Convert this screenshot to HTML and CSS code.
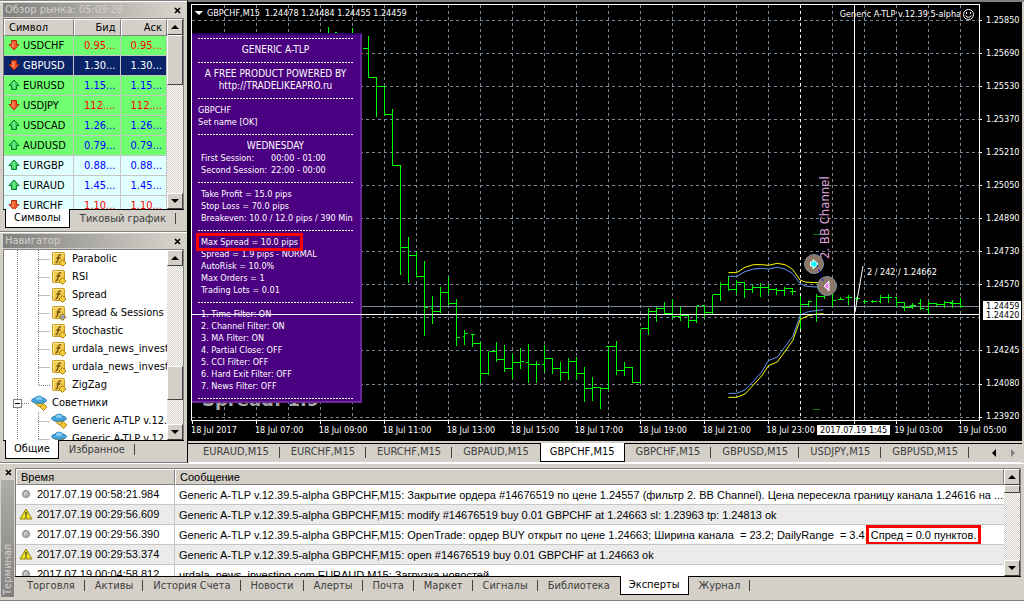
FILE: index.html
```html
<!DOCTYPE html>
<html lang="ru">

<head>
    <meta charset="UTF-8">
    <meta name="viewport" content="width=device-width, initial-scale=1.0">
    <title>GBPCHF,M15</title>
    <link rel="stylesheet" href="styles.css">
</head>

<body>
    <svg class="defs" aria-hidden="true">
        <symbol id="up" viewBox="0 0 12 12">
            <path d="M6 1L11 6.500H8.500V10.500H3.500V6.500H1Z" fill="#3fd860" stroke="#087c28" />
            <path d="M6 3V9" stroke="#a8f8b0" />
        </symbol>
        <symbol id="down" viewBox="0 0 12 12">
            <path d="M6 11L11 5.500H8.500V1.500H3.500V5.500H1Z" fill="#f45a28" stroke="#b02c10" />
            <path d="M5 3V8" stroke="#ffb48c" />
        </symbol>
        <symbol id="func" viewBox="0 0 16 16">
            <rect x="1.500" y="1.500" width="12" height="12" rx="1" fill="#f2c94a" stroke="#c79a20" />
            <path d="M2.500 12V2.500H12" fill="none" stroke="#ffe793" />
            <path d="M10 4Q8 3 7.500 6L6.500 10Q6 12 4.500 11.500M5.500 7H9.500" fill="none" stroke="#6b5210" stroke-width="1.300" />
            <path d="M11.500 8.500L15 12L11.500 15.500L8 12Z" fill="currentColor" stroke="#a37d10" />
        </symbol>
        <symbol id="expert" viewBox="0 0 16 16">
            <path d="M7 6L13 9L12 13L7 11L4 8Z" fill="#f0c83c" stroke="#b28a18" />
            <ellipse cx="8" cy="5.500" rx="7.500" ry="2.800" fill="#4aa8e0" stroke="#2678b0" />
            <path d="M4 5Q4 1 8 1T12 5Q8 7 4 5Z" fill="#7cccf4" stroke="#3c94cc" />
            <path d="M12.500 8.500L16 12L12.500 15.500L9 12Z" fill="#f4cc3c" stroke="#b08818" />
        </symbol>
        <symbol id="warn" viewBox="0 0 14 12">
            <path d="M7 1L13 11H1Z" fill="#eee022" stroke="#8c8010" stroke-linejoin="round" />
            <path d="M7 4V7.500M7 8.500V10" stroke="#333" stroke-width="1.300" />
        </symbol>
        <symbol id="info" viewBox="0 0 14 12">
            <circle cx="7" cy="6" r="3.500" fill="#b4b4b4" stroke="#848484" />
            <path d="M5 7L8 4" stroke="#e8e8e8" />
        </symbol>
        <symbol id="arrow-up" viewBox="0 0 8 4"><path d="M4 0L8 4H0Z" /></symbol>
        <symbol id="arrow-down" viewBox="0 0 8 4"><path d="M0 0H8L4 4Z" /></symbol>
        <symbol id="close" viewBox="0 0 7 7"><path d="M1 1L6 6M6 1L1 6" stroke="#000" stroke-width="1.600" /></symbol>
        <symbol id="guide" viewBox="0 0 46 18">
            <path d="M13.500 0V18M34.500 0V18M34.500 9.500H46" stroke="#808080" stroke-dasharray="1 1" />
        </symbol>
        <symbol id="guide-last" viewBox="0 0 46 18">
            <path d="M13.500 0V18M34.500 0V9.500H46" fill="none" stroke="#808080" stroke-dasharray="1 1" />
        </symbol>
        <symbol id="guide-root" viewBox="0 0 26 18">
            <path d="M13.500 0V18M18 9.500H25" stroke="#808080" stroke-dasharray="1 1" />
            <rect x="9.500" y="5.500" width="8" height="8" fill="#fff" stroke="#808080" />
            <path d="M11 9.500H16" stroke="#000" />
        </symbol>
    </svg>

    <div class="app">
        <aside class="sidebar">
            <section class="panel market">
                <header class="caption"><span>Обзор рынка: 05:09:28</span>
                    <button class="close" aria-label="Закрыть"><svg><use href="#close" /></svg></button>
                </header>
                <div class="view">
                    <div class="clip">
                        <table class="quotes">
                            <thead><tr><th>Символ</th><th>Бид</th><th>Аск</th></tr></thead>
                            <tbody>
                                <tr class="down"><td><svg><use href="#down" /></svg>USDCHF</td><td>0.95...</td><td>0.95...</td></tr>
                                <tr class="down selected"><td><svg><use href="#down" /></svg>GBPUSD</td><td>1.30...</td><td>1.30...</td></tr>
                                <tr><td><svg><use href="#up" /></svg>EURUSD</td><td>1.15...</td><td>1.15...</td></tr>
                                <tr class="down"><td><svg><use href="#down" /></svg>USDJPY</td><td>112....</td><td>112....</td></tr>
                                <tr><td><svg><use href="#up" /></svg>USDCAD</td><td>1.26...</td><td>1.26...</td></tr>
                                <tr><td><svg><use href="#up" /></svg>AUDUSD</td><td>0.79...</td><td>0.79...</td></tr>
                                <tr class="cross"><td><svg><use href="#up" /></svg>EURGBP</td><td>0.88...</td><td>0.88...</td></tr>
                                <tr class="cross"><td><svg><use href="#up" /></svg>EURAUD</td><td>1.45...</td><td>1.45...</td></tr>
                                <tr class="cross down"><td><svg><use href="#down" /></svg>EURCHF</td><td>1.10...</td><td>1.10...</td></tr>
                            </tbody>
                        </table>
                    </div>
                    <div class="scroll">
                        <button aria-label="Вверх"><svg><use href="#arrow-up" /></svg></button>
                        <i class="thumb thumb-market"></i>
                        <button class="last" aria-label="Вниз"><svg><use href="#arrow-down" /></svg></button>
                    </div>
                </div>
                <nav class="tabs">
                    <button class="active">Символы</button><button>Тиковый график</button>
                </nav>
            </section>

            <section class="panel navigator">
                <header class="caption"><span>Навигатор</span>
                    <button class="close" aria-label="Закрыть"><svg><use href="#close" /></svg></button>
                </header>
                <div class="view">
                    <div class="clip">
                        <ul class="tree">
                            <li><svg class="guide"><use href="#guide" /></svg><svg class="icon"><use href="#func" /></svg>Parabolic</li>
                            <li><svg class="guide"><use href="#guide" /></svg><svg class="icon"><use href="#func" /></svg>RSI</li>
                            <li><svg class="guide"><use href="#guide" /></svg><svg class="icon"><use href="#func" /></svg>Spread</li>
                            <li><svg class="guide"><use href="#guide" /></svg><svg class="icon gray"><use href="#func" /></svg>Spread &amp; Sessions Info</li>
                            <li><svg class="guide"><use href="#guide" /></svg><svg class="icon"><use href="#func" /></svg>Stochastic</li>
                            <li><svg class="guide"><use href="#guide" /></svg><svg class="icon"><use href="#func" /></svg>urdala_news_investing</li>
                            <li><svg class="guide"><use href="#guide" /></svg><svg class="icon"><use href="#func" /></svg>urdala_news_investing</li>
                            <li><svg class="guide"><use href="#guide-last" /></svg><svg class="icon"><use href="#func" /></svg>ZigZag</li>
                            <li class="root"><svg class="guide"><use href="#guide-root" /></svg><svg class="icon"><use href="#expert" /></svg>Советники</li>
                            <li><svg class="guide"><use href="#guide" /></svg><svg class="icon"><use href="#expert" /></svg>Generic A-TLP v.12.39</li>
                            <li><svg class="guide"><use href="#guide" /></svg><svg class="icon"><use href="#expert" /></svg>Generic A-TLP v.12.39</li>
                        </ul>
                    </div>
                    <div class="scroll">
                        <button aria-label="Вверх"><svg><use href="#arrow-up" /></svg></button>
                        <i class="thumb thumb-nav"></i>
                        <button class="last" aria-label="Вниз"><svg><use href="#arrow-down" /></svg></button>
                    </div>
                </div>
                <nav class="tabs">
                    <button class="active">Общие</button><button>Избранное</button>
                </nav>
            </section>
        </aside>

        <main class="workspace">
            <div class="chart">
                <div class="plot">
                    <svg class="drawing" viewBox="191 4 792 421" preserveAspectRatio="xMaxYMin meet">
                        <!-- grid -->
                        <path class="grid" d="M192 20.500H979M192 53.500H979M192 86.500H979M192 119.500H979M192 152.500H979M192 185.500H979M192 218.500H979M192 251.500H979M192 284.500H979M192 317.500H979M192 350.500H979M192 384.500H979M192 417.500H979" />
                        <path class="grid" d="M224.500 5V420M256.500 5V420M288.500 5V420M320.500 5V420M352.500 5V420M384.500 5V420M416.500 5V420M448.500 5V420M480.500 5V420M512.500 5V420M544.500 5V420M576.500 5V420M608.500 5V420M640.500 5V420M672.500 5V420M704.500 5V420M736.500 5V420M768.500 5V420M832.500 5V420M864.500 5V420M896.500 5V420M928.500 5V420M960.500 5V420" />
                        <path class="day" d="M800.500 5V420" />
                        <path d="M192 306.500H979" stroke="#778899" />
                        <!-- frame and axis ticks -->
                        <path class="frame" d="M191.500 4.500H979.500V420.500H191.500Z" />
                        <path class="frame" d="M979 20.500H982M979 53.500H982M979 86.500H982M979 119.500H982M979 152.500H982M979 185.500H982M979 218.500H982M979 251.500H982M979 284.500H982M979 350.500H982M979 384.500H982M979 417.500H982M192.500 420V424M256.500 420V424M320.500 420V424M384.500 420V424M448.500 420V424M512.500 420V424M576.500 420V424M640.500 420V424M704.500 420V424M768.500 420V424M896.500 420V424M960.500 420V424" />
                        <!-- price bars -->
                        <g class="bars" transform="translate(.5 .5)">
                            <path d="M328 26V33H330M336 31V33M334 32H336M352 27V33M362 48H368M368 35V77H376M376 77V116M376 86H384M384 86V115M384 114H392M392 108V165H400M400 165V274M400 247H408M408 236V282M408 255H416M416 250V277M416 276H424M424 260V335M424 307H427M430 308H432M432 295V323M432 311H440M440 286V312M440 292H448M448 276V304M448 303H456M456 298V345M456 337H459M462 336H464M464 329V344M464 333H467M470 334H474M472 334V346M472 343H480" />
                            <path d="M480 341V382M480 373H488M488 351V374M488 351H496M496 341V361M496 359H504M504 344V371M504 368H512M512 353V378M512 362H520M520 347V368M520 361H523M525 362H528M528 343V382M528 364H539M536 360V382M541 364H544M544 344V371M544 358H552M552 357V373M552 368H560M560 361V380M560 372H568M568 357V379M568 361H576M576 356V379M576 373H584M584 366V401M584 388H592M592 376V400M592 387H600M600 386V408M600 388H608M608 346V389M605 346H616M616 340V374M616 370H624M624 361V375M624 367H632M632 366V382M632 382H640M640 328V383M640 328H648M648 307V334M648 311H656M656 306V321M656 308H664M664 301V314M664 313H672M672 298V318M672 316H680M680 306V320M680 315H688M688 315V327M688 320H696M696 305V322M696 305H698M701 305H704" />
                            <path d="M704 305V317M704 312H712M712 294V313M712 294H720M720 281V300M720 284H728M728 275V290M728 289H736M736 279V293M736 282H744M744 282V297M744 289H752M752 284V292M752 287H760M760 282V296M760 287H768M768 284V293M768 289H776M776 287V294M776 290H784M784 286V295M784 288H792M792 288V294M789 291H795M800 295V328M800 304H808M808 300V306M808 301H811M816 293V321M816 296H824M824 285V298M824 289H832M832 289V306M832 300H835M837 299H843M840 296V299M845 297H851M848 294V304M854 298H859M856 296V302M862 301H867M864 299V303M870 301H876M872 299V302M880 294V302M878 301H880M880 297H891M888 293V302M894 297H896M896 296V306M896 302H904M904 302V310M901 307H912M912 302V308M909 305H915M920 298V309M917 303H920M920 308H923M928 300V313M925 309H928M928 303H936M936 302V306M936 304H944M944 300V307M944 302H952M952 299V307M949 303H960M960 297V306H963" />
                        </g>
                        <!-- channel, coordinates in thirds of a unit -->
                        <g class="bands" transform="translate(690 160) scale(.33333)">
                            <path stroke="#ff0" d="M115 338H140L165 322L190 314H215L235 316L262 310L285 314L308 328L330 360L345 366L375 368H400M115 712H140L165 702L190 675L215 648L235 617L262 606L308 542L331 478L355 467L375 463L400 461" />
                            <path stroke="#6495ed" d="M115 349H140L165 335L190 327L215 325L235 327L262 322L285 327L308 341L330 370L345 378L375 381H400M115 700H140L165 690L190 664L215 636L235 602L262 591L285 560L308 530L331 465L355 455L400 449" />
                        </g>
                        <path d="M813 234.500H820M813 409.500H820" stroke="#008000" />
                        <text class="bb" transform="translate(829 259) rotate(-90)">2. BB Channel</text>
                        <g stroke="#7c8a98" fill="#8b7868">
                            <circle cx="814" cy="264" r="9.500" />
                            <circle cx="827" cy="286" r="9.500" />
                        </g>
                        <path d="M817 265L824 283" stroke="#00f" stroke-dasharray="2 3" />
                        <path d="M810.500 262H813V259.500L818 264L813 269V266H810.500Z" fill="#0ff" stroke="#fff" />
                        <path d="M829 281V291L824 286Z" fill="#ee82ee" stroke="#fff" />
                        <text class="spread" x="202" y="406">Spread: 1.9</text>
                        <path d="M194.500 11H203L199 15Z" fill="#fff" />
                        <text class="label" x="207" y="16" xml:space="preserve">GBPCHF,M15  1.24478 1.24484 1.24455 1.24459</text>
                        <text class="label" x="961" y="17" text-anchor="end">Generic A-TLP v.12.39.5-alpha</text>
                        <g fill="none" stroke="#fff">
                            <circle cx="968.500" cy="14.500" r="5" />
                            <path d="M966.500 12V14M970.500 12V14M965.500 15.500Q968.500 19 971.500 15.500" />
                        </g>
                        <text class="label" x="867" y="275">2 / 242 / 1.24662</text>
                    </svg>

                    <div class="report">
                        <hr>
                        <p class="center">GENERIC A-TLP</p>
                        <hr>
                        <p class="center">A FREE PRODUCT POWERED BY</p>
                        <p class="center">http://TRADELIKEAPRO.ru</p>
                        <hr>
                        <p>GBPCHF</p>
                        <p>Set name [OK]</p>
                        <hr>
                        <p class="center">WEDNESDAY</p>
                        <dl class="sessions">
                            <dt>First Session:</dt><dd>00:00 - 01:00</dd>
                            <dt>Second Session:</dt><dd>22:00 - 00:00</dd>
                        </dl>
                        <hr>
                        <div class="values">
                            <p>Take Profit = 15.0 pips</p>
                            <p>Stop Loss = 70.0 pips</p>
                            <p>Breakeven: 10.0 / 12.0 pips / 390 Min</p>
                        </div>
                        <hr>
                        <div class="values">
                            <p><span class="mark">Max Spread = 10.0 pips</span></p>
                            <p>Spread = 1.9 pips - NORMAL</p>
                            <p>AutoRisk = 10.0%</p>
                            <p>Max Orders = 1</p>
                            <p>Trading Lots = 0.01</p>
                        </div>
                        <hr>
                        <div class="values">
                            <p>1. Time Filter: ON</p>
                            <p>2. Channel Filter: ON</p>
                            <p>3. MA Filter: ON</p>
                            <p>4. Partial Close: OFF</p>
                            <p>5. CCI Filter: OFF</p>
                            <p>6. Hard Exit Filter: OFF</p>
                            <p>7. News Filter: OFF</p>
                        </div>
                        <hr>
                    </div>

                    <svg class="drawing crosshair" viewBox="191 4 792 421" preserveAspectRatio="xMaxYMin meet">
                        <path d="M191 314.500H979M854.500 4V424M863 266L855 312" stroke="#fff" />
                    </svg>
                </div>

                <div class="prices">
                    <span>1.25850</span><span>1.25690</span><span>1.25530</span><span>1.25370</span><span>1.25210</span><span>1.25050</span><span>1.24890</span><span>1.24730</span><span>1.24570</span><span></span><span>1.24245</span><span>1.24080</span><span>1.23920</span>
                    <b class="bid">1.24459</b>
                    <b class="cursor">1.24420</b>
                </div>

                <div class="times">
                    <span>18 Jul 2017</span><span>18 Jul 07:00</span><span>18 Jul 09:00</span><span>18 Jul 11:00</span><span>18 Jul 13:00</span><span>18 Jul 15:00</span><span>18 Jul 17:00</span><span>18 Jul 19:00</span><span>18 Jul 21:00</span><span>18 Jul 23:00</span><span></span><span>19 Jul 03:00</span><span>19 Jul 05:00</span>
                    <b class="now">2017.07.19 1:45</b>
                </div>
            </div>

            <nav class="tabs chart-tabs">
                <button>EURAUD,M15</button><button>EURCHF,M15</button><button>EURCHF,M15</button><button class="before">GBPAUD,M15</button><button class="active">GBPCHF,M15</button><button>GBPCHF,M15</button><button>GBPUSD,M15</button><button>USDJPY,M15</button><button>GBPUSD,M15</button>
                <svg class="pager" viewBox="0 0 24 8"><path d="M4 0V8L0 4Z" /><path d="M19 0V8L23 4Z" fill="#808080" /></svg>
            </nav>
        </main>

        <section class="terminal">
            <div class="rail">
                <button class="close" aria-label="Закрыть"><svg><use href="#close" /></svg></button>
                <h2>Терминал</h2>
            </div>
            <div class="log">
                <div class="view">
                    <div class="clip">
                        <table class="journal">
                            <thead><tr><th>Время</th><th>Сообщение</th></tr></thead>
                            <tbody>
                                <tr><td><svg><use href="#info" /></svg>2017.07.19 00:58:21.984</td><td>Generic A-TLP v.12.39.5-alpha GBPCHF,M15: Закрытие ордера #14676519 по цене 1.24557 (фильтр 2. BB Channel). Цена пересекла границу канала 1.24616 на ...</td></tr>
                                <tr><td><svg><use href="#warn" /></svg>2017.07.19 00:29:56.609</td><td>Generic A-TLP v.12.39.5-alpha GBPCHF,M15: modify #14676519 buy 0.01 GBPCHF at 1.24663 sl: 1.23963 tp: 1.24813 ok</td></tr>
                                <tr><td><svg><use href="#info" /></svg>2017.07.19 00:29:56.390</td><td>Generic A-TLP v.12.39.5-alpha GBPCHF,M15: OpenTrade: ордер BUY открыт по цене 1.24663; Ширина канала &nbsp;= 23.2; DailyRange &nbsp;= 3.4; <span class="mark">Спред = 0.0 пунктов.</span></td></tr>
                                <tr><td><svg><use href="#warn" /></svg>2017.07.19 00:29:53.374</td><td>Generic A-TLP v.12.39.5-alpha GBPCHF,M15: open #14676519 buy 0.01 GBPCHF at 1.24663 ok</td></tr>
                                <tr><td><svg><use href="#info" /></svg>2017.07.19 00:04:58.812</td><td>urdala_news_investing.com EURAUD,M15: Загрузка новостей</td></tr>
                            </tbody>
                        </table>
                    </div>
                    <div class="scroll">
                        <button aria-label="Вверх"><svg><use href="#arrow-up" /></svg></button>
                        <i class="thumb thumb-log"></i>
                        <button class="last" aria-label="Вниз"><svg><use href="#arrow-down" /></svg></button>
                    </div>
                </div>
                <nav class="tabs">
                    <button>Торговля</button><button>Активы</button><button>История Счета</button><button>Новости</button><button>Алерты</button><button>Почта</button><button>Маркет</button><button>Сигналы</button><button class="before">Библиотека</button><button class="active">Эксперты</button><button>Журнал</button>
                </nav>
            </div>
        </section>
    </div>
</body>

</html>
```
FILE: styles.css
```css
* {
    box-sizing: border-box;
}

body {
    margin: 0;
    background: #d4d0c8;
    color: #000;
    font: 11px/14px "DejaVu Sans Condensed", "DejaVu Sans", sans-serif;
}

button {
    margin: 0;
    padding: 0;
    border: 0;
    background: none;
    color: inherit;
    font: inherit;
}

p,
h2,
ul,
dl,
dd {
    margin: 0;
    padding: 0;
    font-weight: normal;
}

svg {
    display: block;
    flex: none;
}

.defs {
    position: absolute;
    width: 0;
    height: 0;
}

.app {
    display: grid;
    grid-template-columns: 188px minmax(0, 1fr);
    grid-template-rows: minmax(0, 1fr) 138px;
    height: 100vh;
}

.sidebar {
    display: grid;
    grid-template-columns: minmax(0, 1fr);
    grid-template-rows: 231px minmax(0, 1fr);
    border-right: 1px solid #000;
    border-top: 1px solid #808080;
    min-height: 0;
}

/* docked panels */
.panel {
    display: flex;
    flex-direction: column;
    min-height: 0;
    padding: 1px 3px;
    border-top: 1px solid #fff;
    border-bottom: 1px solid #808080;
}

.caption {
    display: flex;
    flex: none;
    justify-content: space-between;
    height: 14px;
    margin-bottom: 1px;
    padding-left: 2px;
    background: linear-gradient(90deg, #808080, #d4d0c8 92%);
    color: #d4d0c8;
}

.close {
    display: grid;
    place-items: center;
    width: 14px;
    height: 14px;
}

.close svg {
    width: 7px;
    height: 7px;
}

.view {
    display: flex;
    flex: 1;
    min-height: 0;
    border: 1px solid #808080;
    border-bottom: 0;
    background: #fff;
}

.clip {
    flex: 1;
    min-width: 0;
    overflow: hidden;
}

/* scroll bars */
.scroll {
    display: flex;
    flex-direction: column;
    width: 16px;
    background: repeating-conic-gradient(#fff 0 25%, #d4d0c8 0 50%) 0 0 / 2px 2px;
}

.scroll button,
.thumb {
    display: grid;
    place-items: center;
    flex: none;
    height: 16px;
    border: 1px solid;
    border-color: #fff #404040 #404040 #fff;
    background: #d4d0c8;
}

.scroll button svg {
    width: 8px;
    height: 4px;
}

.scroll .last {
    margin-top: auto;
}

.thumb-market {
    height: 50px;
}

.thumb-nav {
    height: 34px;
    margin-top: 100px;
}

.thumb-log {
    height: 8px;
}

/* tables */
table {
    width: 100%;
    border-collapse: separate;
    border-spacing: 0;
    table-layout: fixed;
}

th {
    height: 16px;
    padding: 0 4px;
    border: 1px solid;
    border-color: #fff #808080 #808080 #fff;
    background: #d4d0c8;
    font-weight: normal;
    text-align: left;
}

td {
    height: 20px;
    padding: 0 4px;
    border-right: 1px solid #c6c6c6;
    border-bottom: 1px solid #c6c6c6;
    overflow: hidden;
    white-space: nowrap;
}

td svg {
    display: inline-block;
    margin-bottom: 2px;
    vertical-align: middle;
}

.quotes tbody {
    background: #70ff70;
    color: #00f;
}

.quotes th {
    height: 17px;
}

.quotes th:first-child {
    width: 70px;
}

.quotes th + th,
.quotes td + td {
    text-align: right;
}

.quotes td:first-child {
    color: #000;
}

.quotes td svg {
    width: 12px;
    height: 12px;
    margin-right: 3px;
}

.quotes .down {
    color: #f00;
}

.quotes .cross {
    background: #e0ffff;
}

.quotes .selected,
.quotes .selected td:first-child {
    background: #0a246a;
    color: #fff;
}

.journal {
    font-family: "Liberation Sans", Arial, sans-serif;
}

.journal th:first-child {
    width: 159px;
}

.journal td svg {
    width: 14px;
    height: 12px;
    margin-right: 4px;
}

.journal td:first-child {
    padding-left: 3px;
}

.journal td:last-child {
    border-right: 0;
}

.journal tr:nth-child(even) {
    background: #ebebeb;
}

.journal .mark {
    position: relative;
}

.mark::after {
    position: absolute;
    inset: -4px -5px;
    border: 3px solid #f00;
    content: "";
}

/* navigator tree */
.tree {
    list-style: none;
}

.tree li {
    display: flex;
    align-items: center;
    height: 18px;
    white-space: nowrap;
}

.guide {
    width: 46px;
    height: 18px;
}

.root .guide {
    width: 26px;
}

.icon {
    width: 16px;
    height: 16px;
    margin: 0 5px 0 1px;
    color: #f4cc3c;
}

.gray {
    color: #a0a0a0;
}

/* tabs */
.tabs {
    display: flex;
    flex: none;
    height: 21px;
    padding-left: 2px;
    background: linear-gradient(#000, #000) 0 0 / 100% 1px no-repeat;
    color: #404040;
}

.tabs button {
    position: relative;
    padding: 0 10px 2px;
    white-space: nowrap;
}

.tabs button:not(.active, .before)::after {
    position: absolute;
    top: 4px;
    right: 0;
    height: 11px;
    border-right: 1px solid #404040;
    content: "";
}

.tabs .active {
    height: 19px;
    padding: 0 8px;
    border: 1px solid #000;
    border-top: 0;
    background: #fff;
    color: #000;
}

/* chart window */
.workspace {
    display: flex;
    flex-direction: column;
    min-width: 0;
    padding-right: 2px;
    border-top: 2px solid #808080;
}

.chart {
    display: grid;
    flex: 1;
    grid-template-columns: minmax(0, 1fr) 39px;
    grid-template-rows: minmax(0, 1fr) 16px;
    min-height: 0;
    padding: 2px 0 0 3px;
    background: #000;
    color: #fff;
    font-size: 9px;
    line-height: 10px;
}

.plot,
.prices,
.times {
    position: relative;
    min-height: 0;
}

.drawing {
    width: 100%;
    height: 100%;
}

.crosshair {
    position: absolute;
    inset: 0;
}

.grid {
    stroke: #778899;
    stroke-dasharray: 3 3;
}

.day {
    stroke: #fff;
    stroke-dasharray: 3 3;
}

.frame {
    fill: none;
    stroke: #fff;
}

.bars {
    fill: none;
    stroke: #0f0;
}

.bands {
    fill: none;
    stroke-width: 3;
}

.grid,
.day,
.frame,
.bars {
    shape-rendering: crispEdges;
}

.label {
    fill: #fff;
}

.bb {
    fill: #dda0dd;
    font-size: 13px;
}

.spread {
    fill: #a9a9a9;
    font: bold 18px "DejaVu Sans", sans-serif;
}

.report {
    position: absolute;
    top: 29px;
    left: 1px;
    width: 170px;
    padding: 0 2px 0 6px;
    border-top: 2px solid #2c0068;
    border-right: 2px solid #6a289c;
    border-bottom: 2px solid #6a289c;
    background: #4b0082;
    line-height: 12px;
    white-space: nowrap;
}

.report hr {
    height: 1px;
    margin: 6px 4px 5px 0;
    border: 0;
    background: repeating-linear-gradient(90deg, #fff 0 2px, #4b0082 2px 3px);
}

.report hr:first-child {
    margin-top: 3px;
}

.report hr:last-child {
    margin-bottom: 2px;
}

.center {
    padding-right: 5px;
    font-size: 10px;
    text-align: center;
}

.values,
.sessions {
    padding-left: 3px;
}

.sessions {
    display: grid;
    grid-template-columns: 70px 1fr;
}

.report .mark {
    position: relative;
}

.prices span {
    display: block;
    height: 33px;
    padding-left: 3px;
    line-height: 33px;
}

.prices b,
.now {
    position: absolute;
    background: #fff;
    color: #000;
    font-weight: normal;
    white-space: nowrap;
}

.prices b {
    right: 1px;
    left: 0;
    padding-left: 3px;
}

.bid {
    top: 297px;
}

.cursor {
    top: 306px;
}

.times {
    display: grid;
    grid-column: 1 / -1;
    grid-template-columns: repeat(13, minmax(0, 1fr));
    white-space: nowrap;
}

.now {
    left: 626px;
    padding: 0 3px;
}

.chart-tabs {
    height: 22px;
    padding: 2px 0 0 4px;
    border-bottom: 1px solid #fff;
    background-position: 0 2px;
}

.chart-tabs button {
    padding: 0 11px 2px;
}

.chart-tabs .active {
    padding: 0 9px;
}

.pager {
    width: 24px;
    height: 8px;
    margin: 6px 6px 0 auto;
}

/* terminal */
.terminal {
    display: flex;
    grid-column: 1 / -1;
    min-width: 0;
    padding: 4px 3px 3px 1px;
    border-top: 1px solid #fff;
    border-bottom: 1px solid #808080;
}

.rail {
    display: flex;
    flex-direction: column;
    width: 14px;
}

.rail .close {
    height: 8px;
}

.rail h2 {
    flex: 1;
    width: 13px;
    margin-top: 4px;
    padding-top: 2px;
    background: linear-gradient(#808080, #b0aea8);
    color: #d4d0c8;
    font-size: 11px;
    line-height: 13px;
    transform: rotate(180deg);
    writing-mode: vertical-rl;
}

.log {
    display: flex;
    flex: 1;
    flex-direction: column;
    min-width: 0;
}
```
